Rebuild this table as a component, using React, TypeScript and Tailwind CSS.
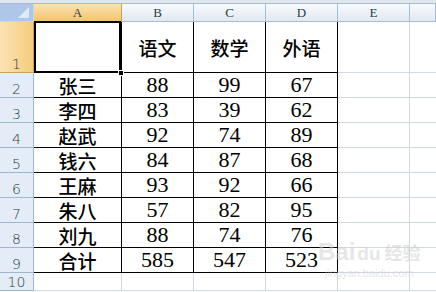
import React from 'react';

const cols = ['A', 'B', 'C', 'D', 'E', 'F'];

const data: (string | number)[][] = [
  ['', '语文', '数学', '外语'],
  ['张三', 88, 99, 67],
  ['李四', 83, 39, 62],
  ['赵武', 92, 74, 89],
  ['钱六', 84, 87, 68],
  ['王麻', 93, 92, 66],
  ['朱八', 57, 82, 95],
  ['刘九', 88, 74, 76],
  ['合计', 585, 547, 523],
  ['', '', '', ''],
];

const cjk = { fontFamily: '"Noto Sans CJK SC", "Noto Sans", sans-serif' };
const serif = { fontFamily: '"Liberation Serif", "Noto Sans CJK SC", serif' };

const App: React.FC = () => {
  return (
    <div className="relative w-[436px] h-[292px] overflow-hidden bg-white">
      <div className="h-[4px] bg-[#dfe6ef] border-b border-[#a9bcd3]" />
      <div className="grid grid-cols-[34px_88px_72px_72px_72px_72px_1fr] grid-rows-[18px_51px_repeat(8,25px)_18px]">
        {/* column headers */}
        <div className="relative bg-[#aec6e8] border-r border-b border-[#c8d6e8]">
          <div className="absolute right-[4px] bottom-[3px] w-0 h-0 border-l-[11px] border-l-transparent border-b-[11px] border-b-[#e1e9f5]" />
        </div>
        {cols.map((c) => (
          <div
            key={c}
            className={
              c === 'A'
                ? 'flex items-center justify-center bg-gradient-to-b from-[#fbe2b4] to-[#f3c56a] border-r border-b border-[#c9a25a] text-[13px] text-[#27413e]'
                : 'flex items-center justify-center bg-gradient-to-b from-[#f7f9fc] to-[#e3e9f1] border-r border-b border-[#a9bcd3] text-[13px] text-[#27413e]'
            }
            style={serif}
          >
            {c === 'F' ? '' : c}
          </div>
        ))}

        {data.map((row, r) => (
          <React.Fragment key={r}>
            <div
              className={
                r === 0
                  ? 'flex items-end justify-center pb-[1px] bg-gradient-to-r from-[#fbe2b4] to-[#f5cc7c] border-r border-b border-[#c9a25a] text-[14px] leading-none text-[#27413e]'
                  : 'flex items-end justify-center pb-[1px] bg-[#e4ecf7] border-r border-b border-[#9eb6ce] text-[14px] leading-none text-[#27413e]'
              }
              style={{ fontFamily: '"DejaVu Sans", sans-serif', fontWeight: 300 }}
            >
              {r + 1}
            </div>
            {row.map((v, ci) => {
              const inTable = r < 9;
              const text = typeof v === 'string';
              return (
                <div
                  key={ci}
                  className={
                    inTable
                      ? 'flex items-center justify-center border-r border-b border-black text-black'
                      : 'flex items-center justify-center border-r border-b border-[#d0d7e5] text-black'
                  }
                >
                  {text ? (
                    <span className="text-[19px] font-medium leading-none" style={cjk}>
                      {v}
                    </span>
                  ) : (
                    <span className="text-[22px] leading-none" style={serif}>
                      {v}
                    </span>
                  )}
                </div>
              );
            })}
            <div className="border-r border-b border-[#d0d7e5]" />
            <div className="border-b border-[#d0d7e5]" />
          </React.Fragment>
        ))}
      </div>

      {/* active cell A1 */}
      <div className="absolute left-[34px] top-[21px] w-[87px] h-[52px] border-2 border-black pointer-events-none" />
      <div className="absolute left-[118px] top-[70px] w-[6px] h-[6px] bg-black border border-white" />

      {/* watermark */}
      <div className="absolute left-[318px] top-[240px] flex flex-col items-center text-[#cfcfcf] opacity-50 pointer-events-none">
        <div className="flex items-baseline gap-[2px]">
          <span className="text-[24px] font-bold leading-none" style={{ fontFamily: '"Liberation Sans", sans-serif' }}>
            Bai
          </span>
          <span className="text-[19px] font-bold leading-none" style={{ fontFamily: '"Liberation Sans", sans-serif' }}>
            du
          </span>
          <span className="text-[18px] font-bold leading-none ml-[2px]" style={cjk}>
            经验
          </span>
        </div>
        <span className="text-[11px] leading-none mt-[4px]" style={{ fontFamily: '"Liberation Sans", sans-serif' }}>
          jingyan.baidu.com
        </span>
      </div>
    </div>
  );
};

export default App;
